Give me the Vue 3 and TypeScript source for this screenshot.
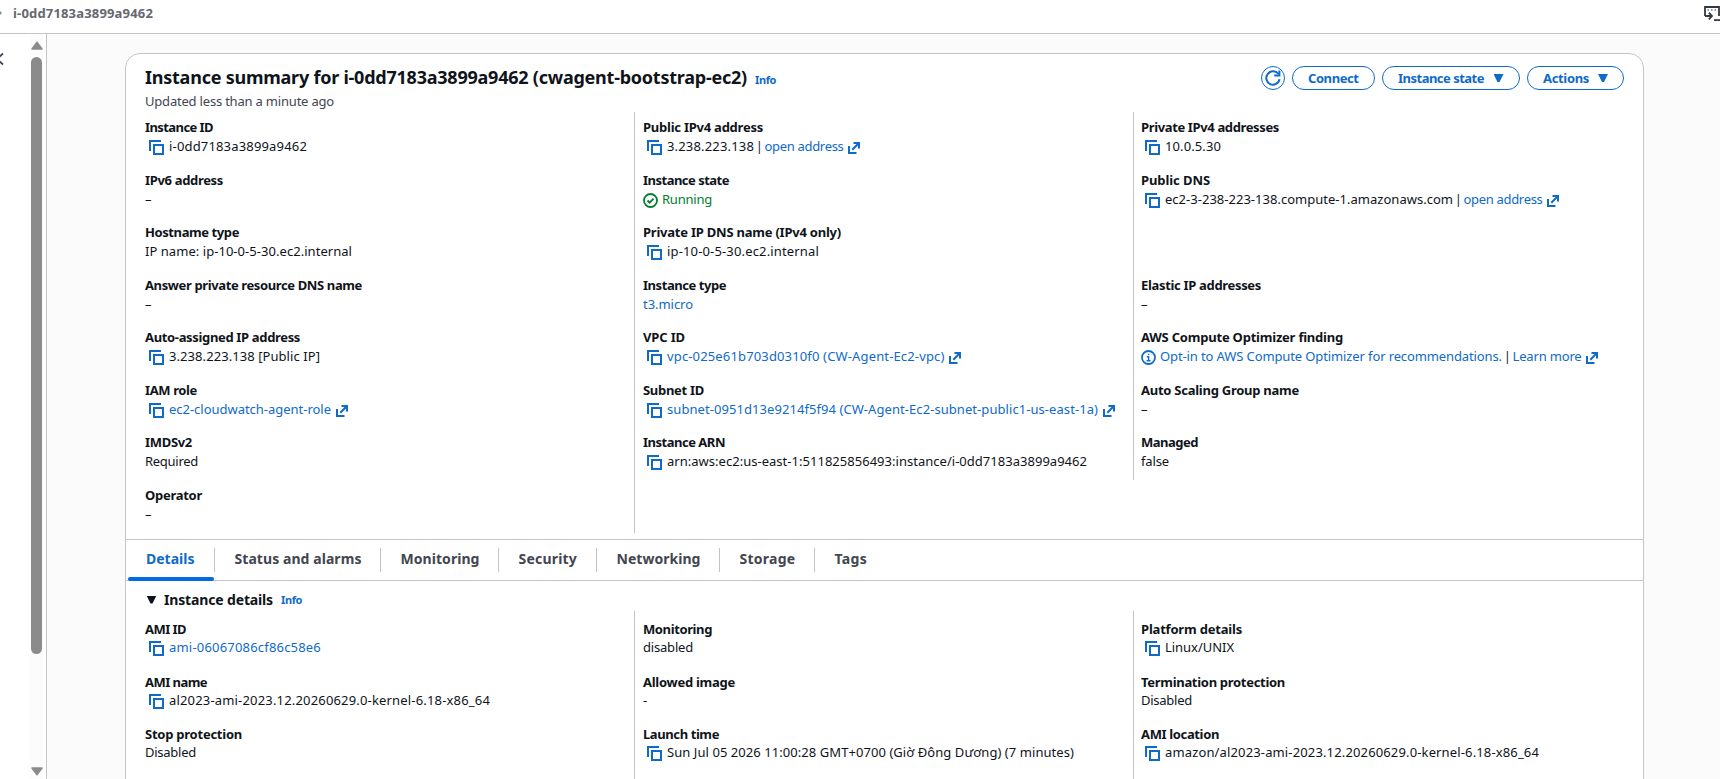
<script setup lang="ts">
import type { Directive } from 'vue'

interface Part {
  text: string
  w?: number
  kind?: 'text' | 'link' | 'ext' | 'ok' | 'sep' | 'notice'
}
interface Field {
  label: string
  lw: number
  copy?: boolean
  parts: Part[]
}

// Tracks text so that its line takes up the given width in pixels.
const vFit: Directive<HTMLElement, number | undefined> = {
  mounted(el, { value }) {
    if (!value) return
    const natural = el.getBoundingClientRect().width
    const count = Array.from(el.textContent ?? '').length
    el.style.letterSpacing = `${(value - natural) / count}px`
  },
}

const f = (label: string, lw: number, text: string, w?: number, copy = false, kind: Part['kind'] = 'text'): Field => ({
  label, lw, copy, parts: [{ text, w, kind }],
})

const summary: (Field | null)[][] = [
  [
    f('Instance ID', 68, 'i-0dd7183a3899a9462', 138, true),
    f('IPv6 address', 78, '–'),
    f('Hostname type', 94, 'IP name: ip-10-0-5-30.ec2.internal', 207),
    f('Answer private resource DNS name', 217, '–'),
    f('Auto-assigned IP address', 155, '3.238.223.138 [Public IP]', 151, true),
    f('IAM role', 52, 'ec2-cloudwatch-agent-role', 162, true, 'ext'),
    f('IMDSv2', 47, 'Required', 53),
    f('Operator', 57, '–'),
  ],
  [
    { label: 'Public IPv4 address', lw: 120, copy: true, parts: [
      { text: '3.238.223.138', w: 87 }, { text: '|', kind: 'sep' }, { text: 'open address', w: 79, kind: 'ext' },
    ] },
    f('Instance state', 86, 'Running', 50, false, 'ok'),
    f('Private IP DNS name (IPv4 only)', 198, 'ip-10-0-5-30.ec2.internal', 152, true),
    f('Instance type', 83, 't3.micro', 50, false, 'link'),
    f('VPC ID', 42, 'vpc-025e61b703d0310f0 (CW-Agent-Ec2-vpc)', 277.5, true, 'ext'),
    f('Subnet ID', 61, 'subnet-0951d13e9214f5f94 (CW-Agent-Ec2-subnet-public1-us-east-1a)', 431, true, 'ext'),
    f('Instance ARN', 82, 'arn:aws:ec2:us-east-1:511825856493:instance/i-0dd7183a3899a9462', 420, true),
    null,
  ],
  [
    f('Private IPv4 addresses', 138, '10.0.5.30', 56, true),
    { label: 'Public DNS', lw: 69, copy: true, parts: [
      { text: 'ec2-3-238-223-138.compute-1.amazonaws.com', w: 288 }, { text: '|', kind: 'sep' }, { text: 'open address', w: 79, kind: 'ext' },
    ] },
    null,
    f('Elastic IP addresses', 120, '–'),
    { label: 'AWS Compute Optimizer finding', lw: 202, parts: [
      { text: 'Opt-in to AWS Compute Optimizer for recommendations.', w: 342, kind: 'notice' }, { text: '|', kind: 'sep' }, { text: 'Learn more', w: 69, kind: 'ext' },
    ] },
    f('Auto Scaling Group name', 158, '–'),
    f('Managed', 57, 'false', 28),
  ],
]

const details: (Field | null)[][] = [
  [
    f('AMI ID', 41, 'ami-06067086cf86c58e6', 152, true, 'link'),
    f('AMI name', 62, 'al2023-ami-2023.12.20260629.0-kernel-6.18-x86_64', 321, true),
    f('Stop protection', 97, 'Disabled', 51),
  ],
  [
    f('Monitoring', 69, 'disabled', 50),
    f('Allowed image', 92, '-'),
    f('Launch time', 76, 'Sun Jul 05 2026 11:00:28 GMT+0700 (Giờ Đông Dương) (7 minutes)', 407, true),
  ],
  [
    f('Platform details', 101, 'Linux/UNIX', 69, true),
    f('Termination protection', 144, 'Disabled', 51),
    f('AMI location', 78, 'amazon/al2023-ami-2023.12.20260629.0-kernel-6.18-x86_64', 374, true),
  ],
]

const sections = [summary, details]

const tabs = [
  { name: 'Details', w: 48.5, box: 87 },
  { name: 'Status and alarms', w: 127, box: 166 },
  { name: 'Monitoring', w: 79, box: 118 },
  { name: 'Security', w: 58.5, box: 98 },
  { name: 'Networking', w: 84, box: 123 },
  { name: 'Storage', w: 56, box: 95 },
  { name: 'Tags', w: 32.5, box: 72 },
]
</script>

<template>
  <div class="page">
    <header class="topbar">
      <span class="crumb-arrow"></span>
      <span v-fit="140" class="crumb">i-0dd7183a3899a9462</span>
      <svg class="shell" width="16" height="16" viewBox="0 0 16 16" fill="none" stroke="#33383f" stroke-width="1.800">
        <path d="M1 10V1h14v9" />
        <path d="M3.500 4h1.500M7 4h1.500M10.500 4H12" stroke-width="1.200" />
        <path d="M1 10h6.500M4.800 6.600L8 10l-3.200 3.400M10 14.200h6" />
      </svg>
    </header>

    <div class="body">
      <aside class="side">
        <svg class="chevron" width="4" height="14" viewBox="0 0 4 14" fill="none" stroke="#424650" stroke-width="1.800">
          <path d="M3 1.500L-3 7l6 5.500" />
        </svg>
        <div class="scrollbar">
          <svg width="12" height="9" viewBox="0 0 12 9"><path d="M6 1.200L11 8H1z" fill="#8b8b8b" stroke="#8b8b8b" stroke-width="1.500" stroke-linejoin="round" /></svg>
          <div class="thumb"></div>
          <svg class="down" width="12" height="9" viewBox="0 0 12 9"><path d="M6 7.800L11 1H1z" fill="#8b8b8b" stroke="#8b8b8b" stroke-width="1.500" stroke-linejoin="round" /></svg>
        </div>
      </aside>

      <main class="main">
        <section class="card">
          <div class="head">
            <div>
              <div class="title-row">
                <h1 v-fit="602">Instance summary for i-0dd7183a3899a9462 (cwagent-bootstrap-ec2)</h1>
                <a v-fit="21" class="info">Info</a>
              </div>
              <p v-fit="189" class="updated">Updated less than a minute ago</p>
            </div>
            <div class="actions">
              <button class="btn round">
                <svg width="16" height="16" viewBox="0 0 16 16" fill="none" stroke="currentColor" stroke-width="2">
                  <path d="M14.600 9.300A6.700 6.700 0 1 1 13.400 4" /><path d="M14.400 0.500v5H9.200" />
                </svg>
              </button>
              <button class="btn connect"><span v-fit="50.500">Connect</span></button>
              <button class="btn state"><span v-fit="86">Instance state</span><i class="caret"></i></button>
              <button class="btn acts"><span v-fit="46">Actions</span><i class="caret"></i></button>
            </div>
          </div>

          <template v-for="(section, s) in sections" :key="s">
            <template v-if="s === 1">
              <nav class="tabs">
                <div v-for="(tab, i) in tabs" :key="tab.name" class="tab" :class="{ active: i === 0 }" :style="{ width: tab.box + 'px' }">
                  <span v-fit="tab.w">{{ tab.name }}</span>
                </div>
              </nav>
              <div class="expander">
                <i class="caret dark"></i>
                <h2 v-fit="109">Instance details</h2>
                <a v-fit="21" class="info">Info</a>
              </div>
            </template>
            <div class="grid" :class="{ lower: s === 1 }">
              <div v-for="(col, c) in section" :key="c" class="col">
                <div v-for="(field, r) in col" :key="r" class="field">
                  <template v-if="field">
                    <div class="label"><span v-fit="field.lw">{{ field.label }}</span></div>
                    <div class="value">
                      <svg v-if="field.copy" class="copy" width="15" height="15" viewBox="0 0 15 15" fill="none" stroke="#0f6ac9" stroke-width="2">
                        <path d="M1 11V1h11" /><rect x="5" y="5" width="9" height="9" />
                      </svg>
                      <template v-for="(part, p) in field.parts" :key="p">
                        <svg v-if="part.kind === 'ok'" class="status" width="15" height="15" viewBox="0 0 15 15" fill="none" stroke="#00802f" stroke-width="1.800">
                          <circle cx="7.500" cy="7.500" r="6.500" /><path d="M4.500 7.500l2.200 2.200 3.800-4" />
                        </svg>
                        <svg v-if="part.kind === 'notice'" class="status" width="15" height="15" viewBox="0 0 15 15" fill="none" stroke="#0f6ac9" stroke-width="1.800">
                          <circle cx="7.500" cy="7.500" r="6.500" /><path d="M5.800 6.800h1.800v3.600M5.600 10.800h3.900M6.800 4.400h1.500" stroke-width="1.400" />
                        </svg>
                        <span v-fit="part.w" :class="part.kind">{{ part.text }}</span>
                        <svg v-if="part.kind === 'ext'" class="exticon" width="12" height="12" viewBox="0 0 12 12" fill="none" stroke="#0f6ac9" stroke-width="2">
                          <path d="M1 4v7h7.500M4.300 7.700L10 2M5.500 1H11v5.500" />
                        </svg>
                      </template>
                    </div>
                  </template>
                </div>
              </div>
            </div>
          </template>
        </section>
      </main>
    </div>
  </div>
</template>

<style>
body {
  overflow: hidden;
}
</style>

<style scoped>
* {
  box-sizing: border-box;
}
.page {
  display: flex;
  flex-direction: column;
  height: 779px;
  overflow: hidden;
  background: #fff;
  color: #0f141a;
  font: 13px/18px "Noto Sans", "Open Sans", sans-serif;
  white-space: nowrap;
}
span, h1, h2, a, p {
  display: inline-block;
  margin: 0;
}
.topbar {
  display: flex;
  flex: none;
  align-items: center;
  height: 34px;
  padding-bottom: 7px;
  border-bottom: 1px solid #c3c4c8;
}
.crumb-arrow {
  width: 0;
  margin-right: 11px;
  border-left: 2px solid #8c8c94;
  border-top: 2px solid transparent;
  border-bottom: 2px solid transparent;
}
.crumb {
  color: #656871;
  font-weight: 700;
}
.shell {
  margin: 1px 0 0 auto;
}
.body {
  display: flex;
  flex: 1;
  min-height: 0;
}
.side {
  display: flex;
  justify-content: space-between;
  flex: none;
  width: 47px;
  border-right: 1px solid #c3c4c8;
}
.chevron {
  margin-top: 18px;
}
.scrollbar {
  display: flex;
  flex-direction: column;
  align-items: center;
  width: 13px;
  margin-right: 3px;
  padding: 7px 0 3px;
  background: #fcfcfc;
}
.scrollbar svg {
  flex: none;
}
.thumb {
  width: 11px;
  height: 597px;
  margin-top: 7px;
  border-radius: 6px;
  background: #8b8b8b;
}
.down {
  margin-top: auto;
}
.main {
  flex: 1;
  padding: 19px 76px 0 78px;
  background: #fbfbfb;
}
.card {
  height: 800px;
  border: 1px solid #c3c4c8;
  border-radius: 15px 15px 0 0;
  background: #fff;
}
.head {
  display: flex;
  justify-content: space-between;
  height: 58px;
  padding: 11px 19px 0 19px;
}
.title-row {
  display: flex;
  align-items: baseline;
  height: 26px;
}
h1 {
  font-size: 18px;
  line-height: 24px;
}
.info {
  margin-left: 8px;
  color: #0f6ac9;
  font-size: 11px;
  font-weight: 700;
}
.updated {
  color: #424650;
  line-height: 20px;
}
.actions {
  display: flex;
  align-items: flex-start;
  gap: 7.5px;
  padding-top: 1px;
}
.btn {
  display: flex;
  align-items: center;
  height: 24px;
  padding: 0 15px;
  border: 1.5px solid #0f6ac9;
  border-radius: 12px;
  background: #fff;
  color: #0f6ac9;
  font: 700 13px/18px "Noto Sans", "Open Sans", sans-serif;
}
.round {
  justify-content: center;
  width: 24px;
  padding: 0;
}
.round svg {
  flex: none;
}
.connect {
  width: 82.5px;
  justify-content: center;
}
.state {
  width: 137.5px;
  justify-content: space-between;
}
.acts {
  width: 97px;
  justify-content: space-between;
}
.caret {
  width: 10px;
  height: 8px;
  background: currentColor;
  clip-path: polygon(0 0, 100% 0, 60% 100%, 40% 100%);
}
.grid {
  display: grid;
  grid-template-columns: 508px 499px 1fr;
  height: 427px;
  align-items: start;
}
.col {
  padding-left: 19px;
}
.col + .col {
  border-left: 1px solid #c3c4c8;
  padding-left: 8px;
}
.col + .col + .col {
  padding-left: 7px;
}
.field {
  height: 52.57px;
  padding-top: 6px;
}
.label {
  height: 19px;
  font-weight: 700;
}
.value {
  display: flex;
  align-items: center;
  height: 18px;
}
.copy {
  flex: none;
  margin: 3px 5px 0 4px;
}
.status {
  flex: none;
  margin: 3px 4px 0 0;
}
.sep {
  width: 10.5px;
  text-align: center;
}
.link, .ext, .notice {
  color: #0f6ac9;
}
.ok {
  color: #00802f;
}
.exticon {
  flex: none;
  margin: 4px 0 0 4.5px;
}
.tabs {
  display: flex;
  height: 42px;
  border: 1px solid #c3c4c8;
  border-width: 1px 0;
  padding-left: 2px;
}
.tab {
  position: relative;
  display: flex;
  align-items: center;
  padding: 0 0 2px 19.5px;
  color: #424650;
  font-size: 14px;
  font-weight: 700;
}
.tab:first-child {
  padding-left: 18px;
}
.tab:not(:last-child)::after {
  content: '';
  position: absolute;
  top: 8px;
  right: 0;
  width: 1px;
  height: 24px;
  background: #c3c4c8;
}
.active {
  color: #0f6ac9;
}
.active::before {
  content: '';
  position: absolute;
  left: 0;
  right: 1px;
  bottom: -1px;
  height: 4px;
  border-radius: 2px;
  background: #006ce0;
}
.expander {
  display: flex;
  align-items: center;
  height: 30px;
  padding: 7px 0 0 20.5px;
}
.expander h2 {
  margin-left: 7.5px;
  font-size: 14px;
  line-height: 20px;
}
.dark {
  color: #0f141a;
}
.lower .col {
  padding-top: 3px;
  height: 200px;
}
.lower .label {
  height: 18px;
}
</style>
